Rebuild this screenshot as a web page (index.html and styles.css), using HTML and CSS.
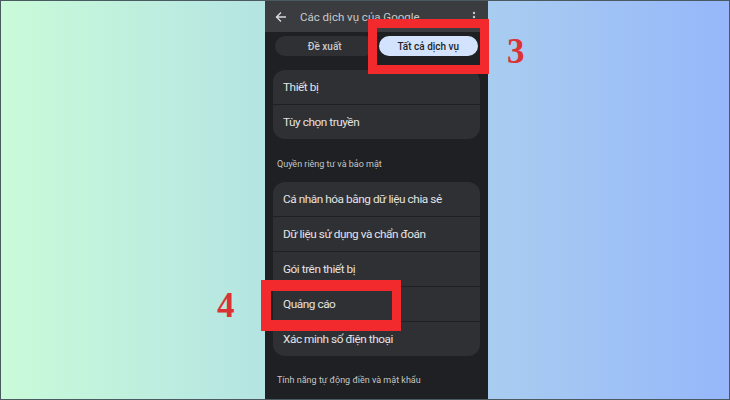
FILE: index.html
```html
<!DOCTYPE html>
<html lang="vi">
<head>
    <meta charset="UTF-8">
    <meta name="viewport" content="width=device-width, initial-scale=1.0">
    <title>Các dịch vụ của Google</title>
    <link rel="stylesheet" href="styles.css">
</head>
<body>
    <div class="page">
        <div class="phone">
            <!-- App bar -->
            <header class="appbar">
                <svg class="back" width="12" height="12" viewBox="0 0 12 12">
                    <path d="M11 6H1.5M6 1.5L1.5 6L6 10.5" fill="none" stroke="#d8dadc" stroke-width="1.4"/>
                </svg>
                <span class="appbar-title">Các dịch vụ của Google</span>
                <svg class="dots" width="4" height="12" viewBox="0 0 4 12">
                    <circle cx="2" cy="2" r="1.2" fill="#c4c7c5"/>
                    <circle cx="2" cy="6" r="1.2" fill="#c4c7c5"/>
                    <circle cx="2" cy="10" r="1.2" fill="#c4c7c5"/>
                </svg>
            </header>

            <div class="content">
                <div class="tabs">
                    <span class="tab">Đề xuất</span>
                    <span class="tab active">Tất cả dịch vụ</span>
                </div>

                <div class="card">
                    <div class="item">Thiết bị</div>
                    <div class="item">Tùy chọn truyền</div>
                </div>

                <div class="section">Quyền riêng tư và bảo mật</div>

                <div class="card">
                    <div class="item">Cá nhân hóa bằng dữ liệu chia sẻ</div>
                    <div class="item">Dữ liệu sử dụng và chẩn đoán</div>
                    <div class="item">Gói trên thiết bị</div>
                    <div class="item">Quảng cáo</div>
                    <div class="item">Xác minh số điện thoại</div>
                </div>

                <div class="section">Tính năng tự động điền và mật khẩu</div>
            </div>
        </div>

        <!-- Step markers -->
        <div class="mark-box box-3"></div>
        <div class="step step-3">3</div>
        <div class="mark-box box-4"></div>
        <div class="step step-4">4</div>
    </div>
</body>
</html>
```

FILE: styles.css
```css
body {
    margin: 0;
    font-family: Roboto, 'Noto Sans', sans-serif;
}
.page {
    position: relative;
    width: 730px;
    height: 400px;
    box-sizing: border-box;
    border: 1px solid #4a5a60;
    padding-left: 264px;
    overflow: hidden;
    background: linear-gradient(90deg, #c9fbd9 0%, #b5e5e2 35%, #a9cdf0 67%, #96b7fa 100%);
}
.phone {
    width: 223px;
    height: 100%;
    background: #1f2023;
    display: flex;
    flex-direction: column;
}
.appbar {
    height: 31px;
    background: #3b3c3f;
    display: flex;
    align-items: center;
    padding: 0 12px 0 10px;
    flex-shrink: 0;
}
.back {
    margin-right: 13px;
}
.appbar-title {
    flex: 1;
    color: #c8cacc;
    font-size: 11.5px;
}
.content {
    padding: 4px 8px 0 8px;
}
.tabs {
    display: flex;
    gap: 4px;
    padding: 0 2px;
    margin-bottom: 14px;
}
.tab {
    flex: 1;
    height: 20px;
    border-radius: 10px;
    background: #2e3033;
    color: #c8cacc;
    font-size: 10px;
    font-weight: 500;
    display: flex;
    align-items: center;
    justify-content: center;
}
.tab.active {
    background: #d3e3fd;
    color: #1f1f1f;
}
.card {
    border-radius: 12px;
    overflow: hidden;
    display: flex;
    flex-direction: column;
    gap: 1px;
}
.item {
    height: 34px;
    background: #2f3033;
    color: #e3e3e3;
    font-size: 11.8px;
    letter-spacing: -0.45px;
    display: flex;
    align-items: center;
    padding-left: 10px;
}
.section {
    color: #c4c7c5;
    font-size: 9px;
    padding: 20px 0 13px 4px;
}
.section:last-child {
    padding-top: 19px;
}
.mark-box {
    position: absolute;
    box-sizing: border-box;
    border: 9px solid #f22a2d;
}
.box-3 {
    left: 367px;
    top: 18px;
    width: 121px;
    height: 55px;
}
.box-4 {
    left: 260px;
    top: 279px;
    width: 140px;
    height: 51px;
    border-width: 11px 9px 11px 10px;
}
.step {
    position: absolute;
    font-family: 'Liberation Serif', 'DejaVu Serif', serif;
    font-weight: bold;
    color: #db3236;
    font-size: 35px;
    line-height: 1;
}
.step-3 {
    left: 506px;
    top: 33px;
}
.step-4 {
    left: 216px;
    top: 287px;
}
```
